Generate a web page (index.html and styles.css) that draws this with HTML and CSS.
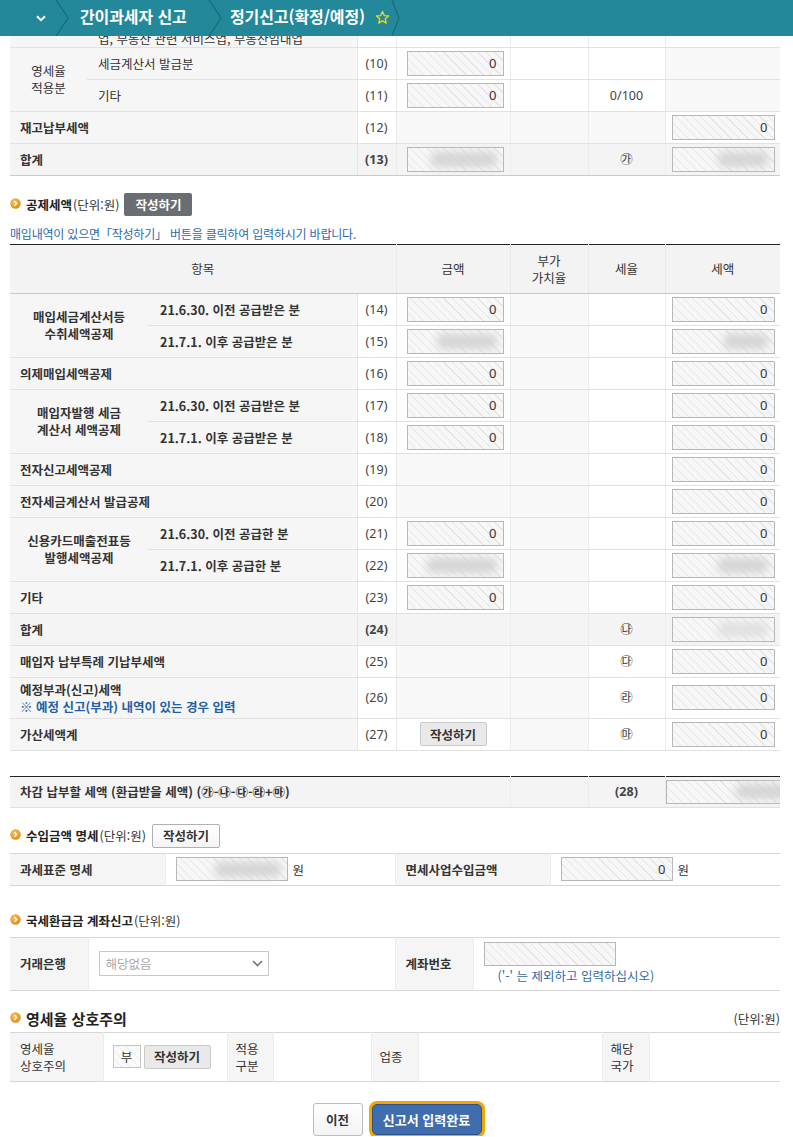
FILE: index.html
```html
<!DOCTYPE html>
<html lang="ko">
<head>
<meta charset="utf-8">
<title>정기신고(확정/예정)</title>
<link rel="stylesheet" href="styles.css">
</head>
<body>
<header class="topbar">
  <div class="tb-toggle">
    <svg width="10" height="7" viewBox="0 0 10 7"><path d="M1 1.2 L5 5.2 L9 1.2" fill="none" stroke="#fff" stroke-width="2"/></svg>
  </div>
  <svg class="tb-sep" width="14" height="36" viewBox="0 0 14 36"><polyline points="0.5,-1 13,18 0.5,37" fill="none" stroke="#186b77" stroke-width="1.2"/></svg>
  <span class="tb-crumb c1">간이과세자 신고</span>
  <svg class="tb-sep" width="14" height="36" viewBox="0 0 14 36"><polyline points="0.5,-1 13,18 0.5,37" fill="none" stroke="#186b77" stroke-width="1.2"/></svg>
  <span class="tb-crumb c2">정기신고(확정/예정)</span>
  <svg class="tb-star" width="15" height="15" viewBox="0 0 24 24"><path d="M12 2.5 L14.8 8.9 L21.7 9.5 L16.5 14.1 L18 20.9 L12 17.3 L6 20.9 L7.5 14.1 L2.3 9.5 L9.2 8.9 Z" fill="none" stroke="#f3d21d" stroke-width="2.2" stroke-linejoin="round"/></svg>
  <svg class="tb-sep last" width="10" height="36" viewBox="0 0 10 36"><polyline points="0.5,-1 8,18 0.5,37" fill="none" stroke="#186b77" stroke-width="1.2"/></svg>
</header>

<main class="page">
  <table class="grid t1">
    <colgroup><col class="w77"><col class="w270"><col class="w39"><col class="w114"><col class="w78"><col class="w77"><col class="w115"></colgroup>
    <tr class="r-part">
      <td class="g"></td>
      <td class="s bottom">업, 부동산 관련 서비스업, 부동산임대업</td>
      <td class="n"></td><td class="v"></td><td class="v"></td><td class="v"></td><td class="v"></td>
    </tr>
    <tr>
      <td class="g reg" rowspan="2">영세율<br>적용분</td>
      <td class="s">세금계산서 발급분</td>
      <td class="n">(10)</td>
      <td class="v"><div class="inp a">0</div></td>
      <td class="v"></td><td class="v"></td><td class="v gr"></td>
    </tr>
    <tr>
      <td class="s">기타</td>
      <td class="n">(11)</td>
      <td class="v"><div class="inp a">0</div></td>
      <td class="v"></td><td class="v c">0/100</td><td class="v gr"></td>
    </tr>
    <tr>
      <td class="l" colspan="2">재고납부세액</td>
      <td class="n">(12)</td>
      <td class="v gr"></td><td class="v gr"></td><td class="v gr"></td>
      <td class="v"><div class="inp t">0</div></td>
    </tr>
    <tr class="tot last">
      <td class="l" colspan="2">합계</td>
      <td class="n b">(13)</td>
      <td class="v"><div class="inp a"><i class="blur bw72"></i></div></td>
      <td class="v"></td><td class="v c">㉮</td>
      <td class="v"><div class="inp t"><i class="blur bw52"></i></div></td>
    </tr>
  </table>

  <div class="sec-head h-deduct">
    <svg class="bullet" width="11" height="11" viewBox="0 0 11 11"><defs><radialGradient id="bg1" cx="40%" cy="35%" r="70%"><stop offset="0" stop-color="#fbc35a"/><stop offset="1" stop-color="#e3870c"/></radialGradient></defs><circle cx="5.5" cy="5.5" r="5.2" fill="url(#bg1)"/><path d="M4.4 3.2 L6.6 5.5 L4.4 7.8" fill="none" stroke="#fff" stroke-width="1.5"/></svg>
    <span class="sec-title">공제세액</span><span class="unit">(단위:원)</span>
    <button class="btn-dark">작성하기</button>
  </div>
  <p class="note">매입내역이 있으면「작성하기」 버튼을 클릭하여 입력하시기 바랍니다.</p>

  <table class="grid t2">
    <colgroup><col class="w138"><col class="w209"><col class="w39"><col class="w114"><col class="w78"><col class="w77"><col class="w115"></colgroup>
    <tr class="head">
      <th colspan="3">항목</th>
      <th>금액</th>
      <th>부가<br>가치율</th>
      <th>세율</th>
      <th>세액</th>
    </tr>
    <tr>
      <td class="g" rowspan="2">매입세금계산서등<br>수취세액공제</td>
      <td class="s">21.6.30. 이전 공급받은 분</td>
      <td class="n">(14)</td>
      <td class="v"><div class="inp a">0</div></td>
      <td class="v gr"></td><td class="v"></td>
      <td class="v"><div class="inp t">0</div></td>
    </tr>
    <tr>
      <td class="s">21.7.1. 이후 공급받은 분</td>
      <td class="n">(15)</td>
      <td class="v"><div class="inp a"><i class="blur bw60"></i></div></td>
      <td class="v gr"></td><td class="v"></td>
      <td class="v"><div class="inp t"><i class="blur bw44"></i></div></td>
    </tr>
    <tr>
      <td class="l" colspan="2">의제매입세액공제</td>
      <td class="n">(16)</td>
      <td class="v"><div class="inp a">0</div></td>
      <td class="v gr"></td><td class="v"></td>
      <td class="v"><div class="inp t">0</div></td>
    </tr>
    <tr>
      <td class="g" rowspan="2">매입자발행 세금<br>계산서 세액공제</td>
      <td class="s">21.6.30. 이전 공급받은 분</td>
      <td class="n">(17)</td>
      <td class="v"><div class="inp a">0</div></td>
      <td class="v gr"></td><td class="v"></td>
      <td class="v"><div class="inp t">0</div></td>
    </tr>
    <tr>
      <td class="s">21.7.1. 이후 공급받은 분</td>
      <td class="n">(18)</td>
      <td class="v"><div class="inp a">0</div></td>
      <td class="v gr"></td><td class="v"></td>
      <td class="v"><div class="inp t">0</div></td>
    </tr>
    <tr>
      <td class="l" colspan="2">전자신고세액공제</td>
      <td class="n">(19)</td>
      <td class="v gr"></td><td class="v gr"></td><td class="v"></td>
      <td class="v"><div class="inp t">0</div></td>
    </tr>
    <tr>
      <td class="l" colspan="2">전자세금계산서 발급공제</td>
      <td class="n">(20)</td>
      <td class="v gr"></td><td class="v gr"></td><td class="v"></td>
      <td class="v"><div class="inp t">0</div></td>
    </tr>
    <tr>
      <td class="g" rowspan="2">신용카드매출전표등<br>발행세액공제</td>
      <td class="s">21.6.30. 이전 공급한 분</td>
      <td class="n">(21)</td>
      <td class="v"><div class="inp a">0</div></td>
      <td class="v gr"></td><td class="v"></td>
      <td class="v"><div class="inp t">0</div></td>
    </tr>
    <tr>
      <td class="s">21.7.1. 이후 공급한 분</td>
      <td class="n">(22)</td>
      <td class="v"><div class="inp a"><i class="blur bw70"></i></div></td>
      <td class="v gr"></td><td class="v"></td>
      <td class="v"><div class="inp t"><i class="blur bw50"></i></div></td>
    </tr>
    <tr>
      <td class="l" colspan="2">기타</td>
      <td class="n">(23)</td>
      <td class="v"><div class="inp a">0</div></td>
      <td class="v gr"></td><td class="v"></td>
      <td class="v"><div class="inp t">0</div></td>
    </tr>
    <tr class="tot">
      <td class="l" colspan="2">합계</td>
      <td class="n b">(24)</td>
      <td class="v"></td><td class="v"></td><td class="v c">㉯</td>
      <td class="v"><div class="inp t"><i class="blur bw50 light"></i></div></td>
    </tr>
    <tr>
      <td class="l" colspan="2">매입자 납부특례 기납부세액</td>
      <td class="n">(25)</td>
      <td class="v gr"></td><td class="v gr"></td><td class="v c">㉰</td>
      <td class="v"><div class="inp t">0</div></td>
    </tr>
    <tr class="r-tall">
      <td class="l two" colspan="2">예정부과(신고)세액<br><span class="blue">※ 예정 신고(부과) 내역이 있는 경우 입력</span></td>
      <td class="n">(26)</td>
      <td class="v gr"></td><td class="v gr"></td><td class="v c">㉱</td>
      <td class="v"><div class="inp t">0</div></td>
    </tr>
    <tr>
      <td class="l" colspan="2">가산세액계</td>
      <td class="n">(27)</td>
      <td class="v c"><button class="btn-light">작성하기</button></td>
      <td class="v gr"></td><td class="v c">㉲</td>
      <td class="v"><div class="inp t">0</div></td>
    </tr>
  </table>

  <table class="grid t3">
    <colgroup><col class="w500"><col class="w78"><col class="w77"><col class="w115"></colgroup>
    <tr class="tot">
      <td class="l">차감 납부할 세액 (환급받을 세액) (㉮-㉯-㉰-㉱+㉲)</td>
      <td class="v"></td>
      <td class="v c b">(28)</td>
      <td class="v clip"><div class="inp wide"><i class="blur bw56"></i></div></td>
    </tr>
  </table>

  <div class="sec-head h-income">
    <svg class="bullet" width="11" height="11" viewBox="0 0 11 11"><defs><radialGradient id="bg2" cx="40%" cy="35%" r="70%"><stop offset="0" stop-color="#fbc35a"/><stop offset="1" stop-color="#e3870c"/></radialGradient></defs><circle cx="5.5" cy="5.5" r="5.2" fill="url(#bg2)"/><path d="M4.4 3.2 L6.6 5.5 L4.4 7.8" fill="none" stroke="#fff" stroke-width="1.5"/></svg>
    <span class="sec-title">수입금액 명세</span><span class="unit">(단위:원)</span>
    <button class="btn-white">작성하기</button>
  </div>
  <table class="form t4">
    <colgroup><col class="w155"><col class="w230"><col class="w155"><col class="w230"></colgroup>
    <tr>
      <th>과세표준 명세</th>
      <td><div class="field"><div class="inp m"><i class="blur bw64"></i></div><span class="won">원</span></div></td>
      <th>면세사업수입금액</th>
      <td><div class="field"><div class="inp m">0</div><span class="won">원</span></div></td>
    </tr>
  </table>

  <div class="sec-head h-refund">
    <svg class="bullet" width="11" height="11" viewBox="0 0 11 11"><defs><radialGradient id="bg3" cx="40%" cy="35%" r="70%"><stop offset="0" stop-color="#fbc35a"/><stop offset="1" stop-color="#e3870c"/></radialGradient></defs><circle cx="5.5" cy="5.5" r="5.2" fill="url(#bg3)"/><path d="M4.4 3.2 L6.6 5.5 L4.4 7.8" fill="none" stroke="#fff" stroke-width="1.5"/></svg>
    <span class="sec-title">국세환급금 계좌신고</span><span class="unit">(단위:원)</span>
  </div>
  <table class="form t5">
    <colgroup><col class="w78"><col class="w307"><col class="w78"><col class="w307"></colgroup>
    <tr>
      <th>거래은행</th>
      <td>
        <div class="select"><span>해당없음</span>
          <svg width="11" height="7" viewBox="0 0 11 7"><path d="M1 1 L5.5 5.5 L10 1" fill="none" stroke="#777" stroke-width="1.6"/></svg>
        </div>
      </td>
      <th>계좌번호</th>
      <td class="acct">
        <div class="inp acc"></div>
        <p class="hint">('-' 는 제외하고 입력하십시오)</p>
      </td>
    </tr>
  </table>

  <div class="sec-head h-zero">
    <div class="zt">
      <svg class="bullet" width="11" height="11" viewBox="0 0 11 11"><defs><radialGradient id="bg4" cx="40%" cy="35%" r="70%"><stop offset="0" stop-color="#fbc35a"/><stop offset="1" stop-color="#e3870c"/></radialGradient></defs><circle cx="5.5" cy="5.5" r="5.2" fill="url(#bg4)"/><path d="M4.4 3.2 L6.6 5.5 L4.4 7.8" fill="none" stroke="#fff" stroke-width="1.5"/></svg>
      <span class="sec-title big">영세율 상호주의</span>
    </div>
    <span class="unit">(단위:원)</span>
  </div>
  <table class="form t6">
    <colgroup><col class="w93"><col class="w124"><col class="w46"><col class="w98"><col class="w47"><col class="w184"><col class="w47"><col class="w131"></colgroup>
    <tr>
      <th class="reg">영세율<br>상호주의</th>
      <td><div class="yn"><span class="inp bu">부</span><button class="btn-light">작성하기</button></div></td>
      <th class="reg sm">적용<br>구분</th>
      <td></td>
      <th class="reg sm">업종</th>
      <td></td>
      <th class="reg sm">해당<br>국가</th>
      <td></td>
    </tr>
  </table>

  <div class="actions">
    <button class="btn-prev">이전</button>
    <button class="btn-done">신고서 입력완료</button>
  </div>
</main>
</body>
</html>
```
FILE: styles.css
```css
* { box-sizing: border-box; }
html, body { margin: 0; padding: 0; background: #fff; }
body {
  font-family: "Noto Sans CJK KR", "Noto Sans", sans-serif;
  font-size: 12.5px;
  color: #333;
  overflow: hidden;
}
button { font-family: inherit; cursor: pointer; }

/* ---------- top bar ---------- */
.topbar {
  position: absolute;
  top: 0; left: 0; right: 0;
  height: 36px;
  background: #23899a;
  display: flex;
  align-items: center;
  color: #fff;
  z-index: 10;
}
.tb-toggle {
  width: 55px; height: 36px;
  display: flex; align-items: center;
  padding-left: 36px;
}
.tb-sep { display: block; flex: none; }
.tb-crumb {
  align-self: flex-start;
  margin-top: 7px;
  font-size: 16px;
  font-weight: 700;
  line-height: 18px;
  white-space: nowrap;
  letter-spacing: -0.1px;
  flex: none;
}
.c1 { width: 139px; padding-left: 11px; }
.c2 { width: 150px; padding-left: 8px; }
.tb-star { margin: 0 1px 2px 3px; flex: none; }

/* ---------- page ---------- */
.page { width: 770px; margin-left: 10px; }

/* ---------- grid tables ---------- */
.grid {
  width: 770px;
  border-collapse: collapse;
  table-layout: fixed;
  font-size: 12.5px;
  color: #333;
}
.w77 { width: 77px; } .w270 { width: 270px; } .w39 { width: 39px; }
.w114 { width: 114px; } .w78 { width: 78px; } .w115 { width: 115px; }
.w138 { width: 138px; } .w209 { width: 209px; } .w500 { width: 500px; }
.w155 { width: 155px; } .w230 { width: 230px; } .w307 { width: 307px; }
.w93 { width: 93px; } .w124 { width: 124px; } .w46 { width: 46px; }
.w98 { width: 98px; } .w47 { width: 47px; } .w184 { width: 184px; }
.w131 { width: 131px; }

.grid tr { height: 32px; }
.grid td {
  padding: 0;
  border-bottom: 1px solid #e1e1e1;
  vertical-align: middle;
  line-height: 17px;
  white-space: nowrap;
}
.grid .g {
  background: #f6f6f6;
  text-align: center;
  font-weight: 700;
}
.grid .g.reg { font-weight: 400; }
.grid .s { background: #f6f6f6; padding-left: 12px; font-weight: 700; }
.t1 .s { padding-left: 11px; font-weight: 400; }
.grid .l { background: #f6f6f6; padding-left: 10px; font-weight: 700; }
.grid .n {
  text-align: center;
  border-left: 1px solid #e6e6e6;
  color: #444;
  font-family: "Noto Sans", "Noto Sans CJK KR", sans-serif;
  font-size: 12.5px;
}
.grid .v { border-left: 1px solid #ececec; }
.grid .gr { background: #f8f8f8; }
.grid .c { text-align: center; }
.grid .b { font-weight: 700; }
.grid .tot td { background: #f4f4f4; }
.grid .v.c { font-family: "Noto Sans", "Noto Sans CJK KR", sans-serif; font-size: 12.5px; color: #444; }

.t1 .r-part { height: 47px; }
.t1 .s.bottom { vertical-align: bottom; padding-bottom: 0; }
.t1 .last td { border-bottom: 1px solid #c9c9c9; }

.t2 { border-top: 1px solid #222; margin-top: 2px; }
.t2 .head { height: 49px; }
.t2 .head th {
  background: #f3f3f3;
  font-weight: 400;
  color: #333;
  font-size: 12.5px;
  line-height: 17px;
  border-left: 1px solid #e9e9e9;
  border-bottom: 1px solid #c8c8c8;
  padding: 0;
}
.t2 .head th:first-child { border-left: none; }
.t2 .r-tall { height: 41px; }
.t2 .l.two { line-height: 17px; padding-top: 1px; }
.blue { color: #1f5fa8; }

.t3 { border-top: 1px solid #222; margin-top: 25px; }
.t3 tr { height: 31px; }
.t3 td { background: #f4f4f4; }
.t3 .clip { overflow: hidden; }

/* ---------- inputs ---------- */
.inp {
  display: flex;
  align-items: center;
  justify-content: flex-end;
  height: 25px;
  border: 1px solid #b7b7b7;
  background: repeating-linear-gradient(45deg, #f7f7f7 0 5px, #e5e5e5 5px 6px);
  padding-right: 6px;
  font-family: "Noto Sans", "Noto Sans CJK KR", sans-serif;
  font-size: 13px;
  color: #333;
}
.inp.a { width: 97px; margin-left: 10px; }
.inp.t { width: 103px; margin-left: 6px; }
.inp.wide { width: 130px; height: 24px; border-right: none; }
.inp.m { width: 112px; height: 24px; }
.inp.acc { width: 132px; height: 24px; }
.blur {
  display: block;
  height: 15px;
  background: #d4d4d4;
  border-radius: 5px;
  filter: blur(4px);
}
.blur.light { background: #e0e0e0; }
.bw72 { width: 66px; } .bw52 { width: 50px; } .bw60 { width: 60px; }
.bw44 { width: 44px; } .bw70 { width: 70px; } .bw50 { width: 50px; }
.bw56 { width: 54px; } .bw64 { width: 66px; }

/* ---------- section headers ---------- */
.sec-head {
  display: flex;
  align-items: center;
  height: 24px;
}
.bullet { flex: none; margin-right: 5px; margin-top: -2px; }
.sec-title { font-weight: 700; font-size: 12.5px; color: #222; }
.sec-title.big { font-size: 15px; }
.unit { font-size: 12.5px; color: #333; margin-left: 1px; }
.h-deduct { margin-top: 17px; height: 23px; }
.h-income { margin-top: 16px; }
.h-refund { margin-top: 23px; }
.h-zero { margin-top: 16px; justify-content: space-between; }
.zt { display: flex; align-items: center; }

.note {
  margin: 10px 0 0;
  font-size: 12px;
  line-height: 16px;
  color: #2d69ad;
  letter-spacing: -0.2px;
}

.btn-dark {
  margin-left: 5px;
  height: 23px;
  width: 68px;
  padding: 0;
  border: none;
  border-radius: 2px;
  background: #6a6d72;
  color: #fff;
  font-weight: 700;
  font-size: 12.5px;
}
.btn-white {
  margin-left: 6px;
  height: 24px;
  width: 68px;
  padding: 0;
  border: 1px solid #b0b0b0;
  border-radius: 2px;
  background: linear-gradient(#ffffff, #f4f4f4);
  color: #333;
  font-weight: 700;
  font-size: 12.5px;
}
.btn-light {
  height: 24px;
  width: 67px;
  padding: 0;
  border: 1px solid #cacaca;
  border-radius: 2px;
  background: #e9e9e9;
  color: #333;
  font-weight: 700;
  font-size: 12.5px;
}

/* ---------- form tables ---------- */
.form {
  width: 770px;
  border-collapse: collapse;
  table-layout: fixed;
  border-top: 1px solid #d6d6d6;
  border-bottom: 1px solid #d6d6d6;
}
.form th {
  background: #f5f5f5;
  text-align: left;
  padding: 0 0 0 10px;
  font-weight: 700;
  font-size: 12.5px;
  color: #333;
  line-height: 17px;
  border-left: 1px solid #ececec;
}
.form th:first-child { border-left: none; }
.form th.reg { font-weight: 400; }
.form th.sm { padding-left: 8px; }
.form td { padding: 0; border-left: 1px solid #ececec; vertical-align: middle; }
.t4 { margin-top: 5px; }
.t4 tr { height: 32px; }
.field { display: flex; align-items: center; padding-left: 10px; }
.won { margin-left: 5px; font-size: 12.5px; color: #333; }

.t5 { margin-top: 4px; }
.t5 tr { height: 53px; }
.select {
  margin-left: 10px;
  width: 170px;
  height: 25px;
  border: 1px solid #c9c9c9;
  background: #fff;
  display: flex;
  align-items: center;
  justify-content: space-between;
  padding: 0 5px 0 6px;
  color: #a8a8a8;
  font-size: 12.5px;
}
.acct { padding: 4px 0 0 10px !important; vertical-align: top !important; }
.hint {
  margin: 2px 0 0 14px;
  font-size: 12.5px;
  line-height: 16px;
  color: #2d69ad;
}

.t6 { margin-top: 1px; }
.t6 tr { height: 49px; }
.yn { display: flex; align-items: center; padding-left: 9px; gap: 3px; }
.inp.bu {
  width: 28px;
  height: 23px;
  justify-content: center;
  padding: 0;
  font-family: "Noto Sans CJK KR", sans-serif;
  font-size: 12.5px;
  border-color: #c4c4c4;
  background: repeating-linear-gradient(45deg, #fafafa 0 5px, #ececec 5px 6px);
}

/* ---------- actions ---------- */
.actions {
  margin-top: 19px;
  display: flex;
  justify-content: center;
  align-items: flex-start;
  gap: 9px;
  padding-left: 4px;
}
.btn-prev {
  margin-top: 2px;
  width: 50px;
  height: 33px;
  border: 1px solid #bcbcbc;
  border-radius: 3px;
  background: linear-gradient(#ffffff, #f3f3f3);
  color: #333;
  font-weight: 700;
  font-size: 12.5px;
  padding: 0;
}
.btn-done {
  margin-top: 3px;
  width: 110px;
  height: 31px;
  border: 1px solid #2b528f;
  border-radius: 5px;
  background: #3f6dae;
  color: #fff;
  font-weight: 700;
  font-size: 13px;
  padding: 0;
  box-shadow: 0 0 0 3px #f4a600;
}
```
